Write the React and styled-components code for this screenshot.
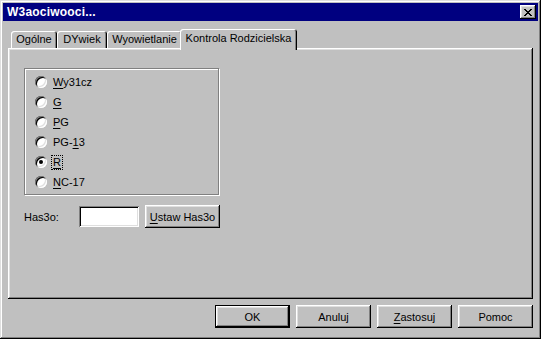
import React, { useState } from "react";
import styled, { createGlobalStyle } from "styled-components";

const GlobalStyle = createGlobalStyle`
  html, body {
    margin: 0;
    padding: 0;
    background: #c0c0c0;
  }
  body {
    font-family: "Liberation Sans", Arial, sans-serif;
    font-size: 11px;
    color: #000;
  }
`;

const raised = `
  box-shadow: inset -1px -1px #000, inset 1px 1px #fff,
    inset -2px -2px #808080, inset 2px 2px #dfdfdf;
`;

const StWindow = styled.div`
  width: 541px;
  height: 339px;
  box-sizing: border-box;
  padding: 3px;
  background: #c0c0c0;
  display: flex;
  flex-direction: column;
  box-shadow: inset -1px -1px #000, inset 1px 1px #dfdfdf,
    inset -2px -2px #808080, inset 2px 2px #fff;
`;

const StTitleBar = styled.div`
  height: 18px;
  background: #000080;
  display: flex;
  align-items: center;
  justify-content: space-between;
  padding: 0 2px 0 4px;
  color: #fff;
  font-weight: 700;
  font-size: 12px;
  letter-spacing: 0.2px;
`;

const StCloseButton = styled.button`
  width: 16px;
  height: 14px;
  padding: 0;
  border: none;
  background: #c0c0c0;
  display: flex;
  align-items: center;
  justify-content: center;
  ${raised}
`;

const StBody = styled.div`
  flex: 1;
  display: flex;
  flex-direction: column;
  padding: 8px 5px 8px 5px;
`;

const StTabRow = styled.div`
  height: 19px;
  display: flex;
  align-items: flex-end;
  padding-left: 3px;
  position: relative;
  z-index: 1;
`;

const StTab = styled.div`
  width: ${(p) => p.$w}px;
  height: ${(p) => (p.$active ? 21 : 17)}px;
  margin: ${(p) => (p.$active ? "0 -2px -2px -2px" : "0")};
  box-sizing: border-box;
  background: #c0c0c0;
  border-radius: 3px 3px 0 0;
  display: flex;
  align-items: center;
  justify-content: center;
  padding-bottom: ${(p) => (p.$active ? 3 : 1)}px;
  position: relative;
  z-index: ${(p) => (p.$active ? 2 : 1)};
  box-shadow: inset 1px 1px #fff, inset -1px 0 #000, inset -2px 0 #808080;
  white-space: nowrap;
`;

const StPanel = styled.div`
  flex: 1;
  box-sizing: border-box;
  padding: 20px 16px;
  box-shadow: inset -1px -1px #000, inset 1px 1px #fff,
    inset -2px -2px #808080, inset 2px 2px #dfdfdf;
`;

const StGroupBox = styled.div`
  width: 195px;
  height: 127px;
  box-sizing: border-box;
  border: 1px solid #808080;
  box-shadow: 1px 1px #fff, inset 1px 1px #fff;
  padding: 3px 0 0 10px;
  display: flex;
  flex-direction: column;
`;

const StRadioRow = styled.label`
  height: 20px;
  display: flex;
  align-items: center;
  gap: 5px;
`;

const StRadio = styled.span`
  width: 12px;
  height: 12px;
  box-sizing: border-box;
  border-radius: 50%;
  background: #fff;
  position: relative;
  box-shadow: inset 1px 1px #808080, inset -1px -1px #fff,
    inset 2px 2px #000, inset -2px -2px #dfdfdf;
  &::after {
    content: "";
    display: ${(p) => (p.$checked ? "block" : "none")};
    position: absolute;
    left: 4px;
    top: 4px;
    width: 4px;
    height: 4px;
    border-radius: 50%;
    background: #000;
  }
`;

const StRadioLabel = styled.span`
  padding: 0 1px;
  outline: ${(p) => (p.$focus ? "1px dotted #000" : "none")};
  line-height: 13px;
`;

const StKey = styled.span`
  text-decoration: underline;
  text-underline-offset: 2px;
`;

const StPasswordRow = styled.div`
  margin-top: 10px;
  display: flex;
  align-items: center;
`;

const StPasswordLabel = styled.span`
  width: 55px;
`;

const StInput = styled.input`
  width: 60px;
  height: 21px;
  box-sizing: border-box;
  border: none;
  background: #fff;
  margin-right: 6px;
  padding: 2px;
  box-shadow: inset 1px 1px #808080, inset -1px -1px #fff,
    inset 2px 2px #000, inset -2px -2px #dfdfdf;
  outline: none;
`;

const StButton = styled.button`
  width: ${(p) => (p.$default ? 75 : 75)}px;
  height: 23px;
  box-sizing: border-box;
  background: #c0c0c0;
  font-family: "Liberation Sans", Arial, sans-serif;
  font-size: 11px;
  color: #000;
  padding: 0;
  border: ${(p) => (p.$default ? "1px solid #000" : "none")};
  ${raised}
`;

const StButtonRow = styled.div`
  margin-top: 6px;
  display: flex;
  justify-content: flex-end;
  gap: 6px;
  padding-right: 0;
`;

const ratings = [
  { key: "W", rest: "y31cz" },
  { key: "G", rest: "" },
  { key: "P", rest: "G" },
  { pre: "PG-", key: "1", rest: "3" },
  { key: "R", rest: "" },
  { key: "N", rest: "C-17" },
];

const tabs = [
  { label: "Ogólne", w: 46 },
  { label: "DYwiek", w: 50 },
  { label: "Wyowietlanie", w: 75 },
  { label: "Kontrola Rodzicielska", w: 117, active: true },
];

const App = () => {
  const [selected, setSelected] = useState(4);

  return (
    <>
      <GlobalStyle />
      <StWindow>
        <StTitleBar>
          <span>W3aociwooci...</span>
          <StCloseButton>
            <svg width="8" height="7" viewBox="0 0 8 7">
              <path
                d="M0 0h2v1h1v1h2V1h1V0h2v1H7v1H6v1H5v1h1v1h1v1h1v1H6V6H5V5H3v1H2v1H0V6h1V5h1V4h1V3H2V2H1V1H0z"
                fill="#000"
              />
            </svg>
          </StCloseButton>
        </StTitleBar>
        <StBody>
          <StTabRow>
            {tabs.map((t) => (
              <StTab key={t.label} $w={t.w} $active={t.active}>
                {t.label}
              </StTab>
            ))}
          </StTabRow>
          <StPanel>
            <StGroupBox>
              {ratings.map((r, i) => (
                <StRadioRow key={i} onClick={() => setSelected(i)}>
                  <StRadio $checked={selected === i} />
                  <StRadioLabel $focus={selected === i}>
                    {r.pre}
                    <StKey>{r.key}</StKey>
                    {r.rest}
                  </StRadioLabel>
                </StRadioRow>
              ))}
            </StGroupBox>
            <StPasswordRow>
              <StPasswordLabel>Has3o:</StPasswordLabel>
              <StInput type="password" />
              <StButton>
                <StKey>U</StKey>staw Has3o
              </StButton>
            </StPasswordRow>
          </StPanel>
          <StButtonRow>
            <StButton $default>OK</StButton>
            <StButton>Anuluj</StButton>
            <StButton>
              <StKey>Z</StKey>astosuj
            </StButton>
            <StButton>Pomoc</StButton>
          </StButtonRow>
        </StBody>
      </StWindow>
    </>
  );
};

export default App;
